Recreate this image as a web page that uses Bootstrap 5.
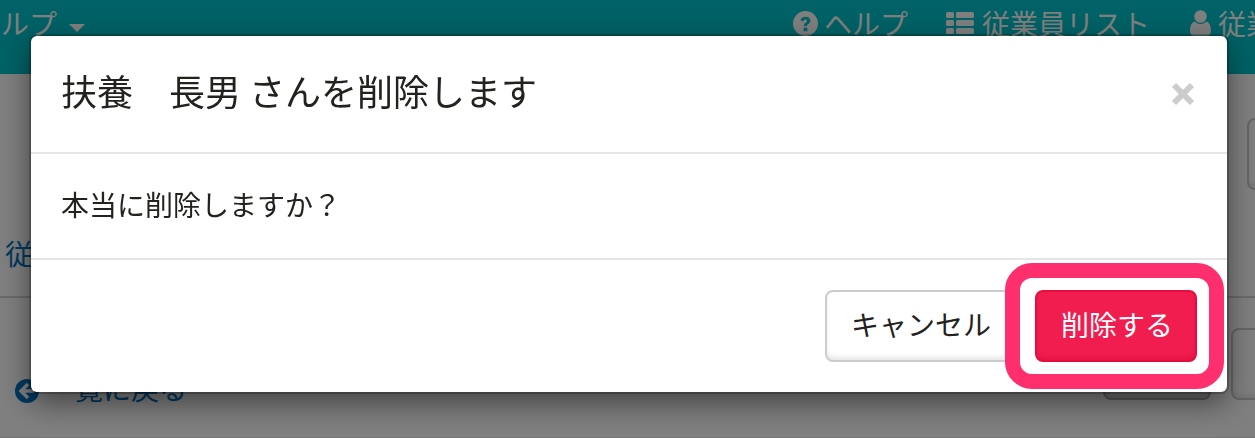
<!DOCTYPE html>
<html lang="ja">
<head>
<meta charset="utf-8">
<meta name="viewport" content="width=device-width, initial-scale=1">
<title>扶養家族</title>
<link href="https://cdn.jsdelivr.net/npm/bootstrap@5.3.0/dist/css/bootstrap.min.css" rel="stylesheet">
<style>
  body { font-family: "Noto Sans CJK JP", sans-serif; font-size: 28px; line-height: 40px; color: #23221e; background: #fff; height: 438px; overflow: hidden; }
  main { overflow: hidden; }
  .topbar { height: 74px; background: #00c4cc; color: #fff; padding: 3px 0 0 1px; white-space: nowrap; overflow: hidden; }
  .topbar svg { display: block; flex: none; }
  .caret { border: 8px solid transparent; border-top-color: #fff; border-bottom: 0; margin: 9px 0 0 12px; }
  .nav-right { width: 462px; overflow: hidden; }
  .nav-help { margin: 0 38px 0 6px; }
  .nav-list { margin-right: 40px; }
  .nav-user { margin-right: 7px; }
  .page-link-blue { color: #0071c1; }
  .strip { height: 224px; border-bottom: 2px solid #d6d6d6; }
  .crumb { margin: 0 0 23px 5px; }
  .back-icon { margin: 5px 8px 0 15px; }
  .back-row { margin-bottom: 29px; }
  .ghost-btn { height: 72px; border: 2px solid #ccc; border-radius: 8px; background: #fff; box-shadow: inset 0 -4px 6px -2px rgba(0,0,0,.12); flex: none; }
  .ghost-btn.pressed { background: #e6e6e6; border-color: #adadad; }
  .edge-btn { width: 60px; margin: 44px -52px 0 0; }
  .row-actions { margin: 30px -84px 0 auto; gap: 20px; }
  .row-actions .ghost-btn { width: 108px; }
  .list-line { height: 140px; border-bottom: 1px solid #f3eaec; }
  .modal-backdrop { --bs-backdrop-opacity: .5; }
  .modal { overflow: hidden; }
  .modal-dialog { max-width: 1196px; margin: 36px 0 0 31px; }
  .modal-content { height: 356px; border: 0; border-radius: 6px; box-shadow: 0 0 0 2px rgba(0,0,0,.2), 0 10px 30px rgba(0,0,0,.5); color: #23221e; }
  .modal-header { height: 118px; padding: 0 32px 0 30px; border-bottom: 2px solid #e5e5e5; }
  .modal-title { font-size: 36px; font-weight: 400; line-height: 52px; margin-top: -9px; white-space: pre; }
  .close-x { border: 0; padding: 0; background: none; line-height: 0; }
  .modal-body { flex: none; height: 104px; padding: 30px 30px 0; }
  .modal-footer { height: 134px; padding: 0 30px; border-top: 2px solid #e5e5e5; gap: 10px; }
  .modal-footer > * { margin: 0; }
  .btn { --bs-btn-font-size: 28px; --bs-btn-line-height: 40px; --bs-btn-border-width: 2px; --bs-btn-border-radius: 8px; height: 72px; padding: 0 24px 5px; white-space: nowrap; box-shadow: inset 0 -4px 6px -2px rgba(0,0,0,.12); }
  .btn-cancel { width: 200px; text-align: left; --bs-btn-bg: #fff; --bs-btn-border-color: #ccc; --bs-btn-color: #23221e; }
  .btn-remove { width: 162px; --bs-btn-bg: #f21d4f; --bs-btn-border-color: #e50d40; --bs-btn-color: #fff; box-shadow: inset 0 -4px 6px -2px rgba(200,0,45,.4); }
  .callout-ring { position: absolute; inset: -27px -27px -27px -30px; border: 15px solid #ff2f6d; border-radius: 27px; box-shadow: inset 0 0 0 13px #fff; pointer-events: none; }
</style>
</head>
<body>
<nav class="topbar d-flex justify-content-between">
  <div class="d-flex align-items-center align-self-start"><span>ルプ</span><span class="caret"></span></div>
  <div class="nav-right d-flex align-self-start align-items-center">
    <svg width="25" height="25" viewBox="0 0 24 24"><circle cx="12" cy="12" r="12" fill="#fff"/><path d="M7.3 9.2C7.7 6.8 9.4 5.6 12 5.600c2.700 0 4.700 1.400 4.700 3.800 0 3.200-3.500 3.100-3.500 5.200h-2.800c0-3.500 3-3.400 3-5.100 0-.8-.6-1.300-1.500-1.300-1 0-1.500.6-1.900 1.700zM10.200 16h3.600v3.500h-3.600z" fill="#00c4cc"/></svg>
    <span class="nav-help">ヘルプ</span>
    <svg class="me-2" width="28" height="23" viewBox="0 0 28 23" fill="#fff"><rect width="8" height="6" rx="1.5"/><rect x="10" width="18" height="6" rx="1.5"/><rect y="8" width="8" height="6" rx="1.5"/><rect x="10" y="8" width="18" height="6" rx="1.5"/><rect y="16" width="8" height="6" rx="1.5"/><rect x="10" y="16" width="18" height="6" rx="1.5"/></svg>
    <span class="nav-list">従業員リスト</span>
    <svg class="nav-user" width="21" height="26" viewBox="0 0 21 26" fill="#fff"><circle cx="10.5" cy="6.5" r="6.300"/><path d="M4.500 11.500q6 5 12 0c3 1 4.500 4.500 4.500 9.500 0 3-1.500 4.500-4 4.500H4c-2.500 0-4-1.500-4-4.500 0-5 1.500-8.500 4.500-9.500z"/></svg>
    <span>従業</span>
  </div>
</nav>
<main>
  <div class="strip d-flex justify-content-between">
    <a class="page-link-blue text-decoration-none align-self-end crumb">従業員</a>
    <div class="ghost-btn edge-btn"></div>
  </div>
  <div class="list-line d-flex">
    <a class="page-link-blue text-decoration-none d-flex align-items-center align-self-end back-row">
      <svg class="back-icon" width="24" height="24" viewBox="0 0 24 24"><circle cx="12" cy="12" r="12" fill="#0071c1"/><path d="M13 5l-7 7 7 7M7 12h12" fill="none" stroke="#fff" stroke-width="3.500"/></svg>
      <span>一覧に戻る</span>
    </a>
    <div class="d-flex row-actions">
      <div class="ghost-btn pressed"></div>
      <div class="ghost-btn"></div>
    </div>
  </div>
</main>

<div class="modal-backdrop show"></div>
<div class="modal d-block" tabindex="-1" role="dialog">
  <div class="modal-dialog">
    <div class="modal-content">
      <div class="modal-header">
        <h4 class="modal-title">扶養　長男 さんを削除します</h4>
        <button type="button" class="close-x" aria-label="閉じる"><svg width="24" height="24" viewBox="0 0 24 24"><path d="M3 3l18 18M21 3L3 21" stroke="#ccc" stroke-width="6"/></svg></button>
      </div>
      <div class="modal-body">本当に削除しますか？</div>
      <div class="modal-footer flex-nowrap">
        <button type="button" class="btn btn-cancel">キャンセル</button>
        <div class="position-relative">
          <div class="callout-ring"></div>
          <button type="button" class="btn btn-remove position-relative d-block">削除する</button>
        </div>
      </div>
    </div>
  </div>
</div>
<script src="https://cdn.jsdelivr.net/npm/bootstrap@5.3.0/dist/js/bootstrap.bundle.min.js"></script>
</body>
</html>
